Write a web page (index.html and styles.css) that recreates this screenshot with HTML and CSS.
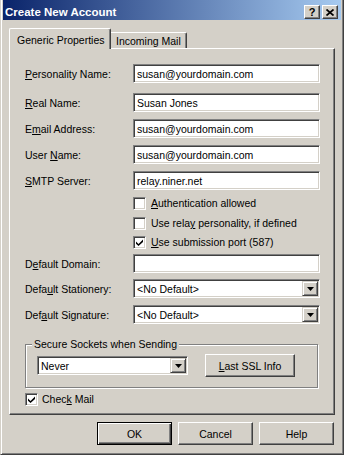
FILE: index.html
```html
<!DOCTYPE html>
<html lang="en">
<head>
<title>Create New Account</title>
<meta charset="UTF-8">
<link rel="stylesheet" href="styles.css">
</head>
<body>
<div class="window">
  <!-- caption -->
  <div class="titlebar">
    <span class="title">Create New Account</span>
    <span class="capbtn help">?</span>
    <span class="capbtn">
      <svg width="8" height="7" viewBox="0 0 8 7"><path d="M0.5 0.5 L7.5 6.5 M7.5 0.5 L0.5 6.5" stroke="#000" stroke-width="1.7"/></svg>
    </span>
  </div>

  <!-- tabs -->
  <div class="tabs">
    <div class="tab active">Generic Properties</div>
    <div class="tab">Incoming Mail</div>
  </div>

  <div class="panel">
    <div class="row first">
      <label class="lbl"><u>P</u>ersonality Name:</label>
      <input class="field" type="text" value="susan@yourdomain.com">
    </div>
    <div class="row second">
      <label class="lbl"><u>R</u>eal Name:</label>
      <input class="field" type="text" value="Susan Jones">
    </div>
    <div class="row">
      <label class="lbl">E<u>m</u>ail Address:</label>
      <input class="field" type="text" value="susan@yourdomain.com">
    </div>
    <div class="row">
      <label class="lbl">User <u>N</u>ame:</label>
      <input class="field" type="text" value="susan@yourdomain.com">
    </div>
    <div class="row">
      <label class="lbl"><u>S</u>MTP Server:</label>
      <input class="field" type="text" value="relay.niner.net">
    </div>

    <div class="check indent cb1"><span class="box"></span><span><u>A</u>uthentication allowed</span></div>
    <div class="check indent cb2"><span class="box"></span><span>Use rela<u>y</u> personality, if defined</span></div>
    <div class="check indent cb3">
      <span class="box"><svg width="7" height="7" viewBox="0 0 7 7"><path d="M0 2.5 L2.5 5 L7 0.5 V3 L2.5 7 L0 4.8 Z" fill="#000"/></svg></span>
      <span><u>U</u>se submission port (587)</span>
    </div>

    <div class="row domain">
      <label class="lbl">D<u>e</u>fault Domain:</label>
      <input class="field" type="text" value="">
    </div>
    <div class="row stationery">
      <label class="lbl">Defa<u>u</u>lt Stationery:</label>
      <div class="combo wide"><span class="combo-text">&lt;No Default&gt;</span><span class="arrow"><svg width="7" height="4" viewBox="0 0 7 4"><path d="M0 0 H7 L3.5 4 Z" fill="#000"/></svg></span></div>
    </div>
    <div class="row signature">
      <label class="lbl">Def<u>a</u>ult Signature:</label>
      <div class="combo wide"><span class="combo-text">&lt;No Default&gt;</span><span class="arrow"><svg width="7" height="4" viewBox="0 0 7 4"><path d="M0 0 H7 L3.5 4 Z" fill="#000"/></svg></span></div>
    </div>

    <fieldset class="group">
      <legend>Secure Sockets when Sending</legend>
      <div class="group-row">
        <div class="combo never"><span class="combo-text">Never</span><span class="arrow"><svg width="7" height="4" viewBox="0 0 7 4"><path d="M0 0 H7 L3.5 4 Z" fill="#000"/></svg></span></div>
        <button class="btn ssl" type="button"><u>L</u>ast SSL Info</button>
      </div>
    </fieldset>

    <div class="check checkmail">
      <span class="box"><svg width="7" height="7" viewBox="0 0 7 7"><path d="M0 2.5 L2.5 5 L7 0.5 V3 L2.5 7 L0 4.8 Z" fill="#000"/></svg></span>
      <span>Chec<u>k</u> Mail</span>
    </div>
  </div>

  <div class="footer">
    <button class="btn default" type="button">OK</button>
    <button class="btn" type="button">Cancel</button>
    <button class="btn" type="button">Help</button>
  </div>
</div>
</body>
</html>
```

FILE: styles.css
```css
body {
    margin: 0;
    background-color: #D4D0C8;
    font-family: "Liberation Sans", Arial, sans-serif;
    font-size: 10.5px;
    color: #000000;
}
u {
    text-decoration-thickness: 1px;
    text-underline-offset: 1px;
}
.window {
    width: 344px;
    height: 455px;
    box-sizing: border-box;
    border: 1px solid #D4D0C8;
    border-top: none;
    border-right-color: #404040;
    border-bottom-color: #404040;
    box-shadow: inset 1px 0 #FFFFFF, inset -1px -1px #808080;
    padding: 0 2px;
}

/* caption bar */
.titlebar {
    height: 20px;
    display: flex;
    align-items: flex-start;
    padding: 5px 3px 0 2px;
    box-sizing: border-box;
    background: linear-gradient(to right, #0A246A, #A6CAF0);
}
.title {
    flex: 1;
    color: #FFFFFF;
    font-weight: bold;
    font-size: 11.5px;
    line-height: 14px;
}
.capbtn {
    width: 16px;
    height: 14px;
    box-sizing: border-box;
    margin-left: 2px;
    display: flex;
    align-items: center;
    justify-content: center;
    background-color: #D4D0C8;
    border: 1px solid;
    border-color: #FFFFFF #404040 #404040 #FFFFFF;
    box-shadow: inset -1px -1px #808080;
}
.capbtn.help {
    font-weight: bold;
    font-size: 11px;
    line-height: 12px;
}

/* tabs */
.tabs {
    height: 28px;
    margin: 0 6px;
    display: flex;
    align-items: flex-end;
    position: relative;
    z-index: 1;
}
.tab {
    height: 16px;
    box-sizing: border-box;
    padding: 2px 5px 0 5px;
    line-height: 13px;
    border-top: 1px solid #FFFFFF;
    border-right: 1px solid #404040;
    box-shadow: inset -1px 0 #808080;
    border-radius: 0 2px 0 0;
}
.tab.active {
    width: 102px;
    height: 21px;
    margin-bottom: -1px;
    padding: 5px 0 0 7px;
    background-color: #D4D0C8;
    border-left: 1px solid #FFFFFF;
    border-radius: 2px 2px 0 0;
}

/* page */
.panel {
    height: 367px;
    margin: 0 6px;
    box-sizing: border-box;
    padding: 15px 14px 0 15px;
    border: 1px solid;
    border-color: #FFFFFF #404040 #404040 #FFFFFF;
    box-shadow: inset -1px -1px #808080;
}
.row {
    display: flex;
    align-items: center;
    margin-top: 7px;
}
.row.first { margin-top: 0; }
.row.second { margin-top: 10px; }
.row.domain { margin-top: 5px; }
.row.stationery { margin-top: 6px; }
.row.signature { margin-top: 7px; }
.lbl {
    width: 108px;
    flex: none;
}
.field {
    width: 187px;
    height: 19px;
    box-sizing: border-box;
    margin: 0;
    padding: 0 3px;
    font: inherit;
    color: #000000;
    background-color: #FFFFFF;
    border: 1px solid;
    border-color: #808080 #FFFFFF #FFFFFF #808080;
    box-shadow: inset 1px 1px #404040, inset -1px -1px #D4D0C8;
    outline: none;
}

/* check boxes */
.check {
    display: flex;
    align-items: center;
    gap: 5px;
    height: 13px;
    line-height: 13px;
}
.check.indent { padding-left: 108px; }
.cb1 { margin-top: 7px; }
.cb2 { margin-top: 7px; }
.cb3 { margin-top: 6px; }
.box {
    width: 13px;
    height: 13px;
    box-sizing: border-box;
    display: flex;
    align-items: center;
    justify-content: center;
    background-color: #FFFFFF;
    border: 1px solid;
    border-color: #808080 #FFFFFF #FFFFFF #808080;
    box-shadow: inset 1px 1px #404040, inset -1px -1px #D4D0C8;
}

/* drop-down lists */
.combo {
    height: 19px;
    box-sizing: border-box;
    display: flex;
    align-items: center;
    padding: 1px 1px 1px 3px;
    background-color: #FFFFFF;
    border: 1px solid;
    border-color: #808080 #FFFFFF #FFFFFF #808080;
    box-shadow: inset 1px 1px #404040, inset -1px -1px #D4D0C8;
}
.combo.wide { width: 187px; }
.combo.never { width: 151px; }
.combo-text { flex: 1; }
.arrow {
    width: 16px;
    height: 15px;
    box-sizing: border-box;
    display: flex;
    align-items: center;
    justify-content: center;
    background-color: #D4D0C8;
    border: 1px solid;
    border-color: #D4D0C8 #404040 #404040 #D4D0C8;
    box-shadow: inset 1px 1px #FFFFFF, inset -1px -1px #808080;
}

/* group box */
.group {
    width: 293px;
    box-sizing: border-box;
    margin: 14px 0 0 0;
    padding: 3px 11px 10px 11px;
    border: 1px solid #808080;
    box-shadow: inset 1px 1px #FFFFFF, 1px 1px #FFFFFF;
}
.group legend {
    margin-left: -5px;
    padding: 0 2px;
    line-height: 13px;
    background-color: #D4D0C8;
}
.group-row {
    display: flex;
    align-items: center;
    height: 23px;
}
.checkmail {
    margin-top: 5px;
    gap: 4px;
}

/* push buttons */
.btn {
    width: 75px;
    height: 23px;
    box-sizing: border-box;
    margin: 0;
    padding: 0;
    font: inherit;
    color: #000000;
    background-color: #D4D0C8;
    border: 1px solid;
    border-color: #FFFFFF #404040 #404040 #FFFFFF;
    box-shadow: inset -1px -1px #808080;
}
.btn.default {
    border-color: #000000;
    box-shadow: inset 1px 1px #FFFFFF, inset -1px -1px #404040, inset -2px -2px #808080;
}
.btn.ssl {
    width: 90px;
    margin-left: 17px;
}
.footer {
    display: flex;
    justify-content: flex-end;
    gap: 6px;
    margin-top: 7px;
    padding-right: 7px;
}
```
